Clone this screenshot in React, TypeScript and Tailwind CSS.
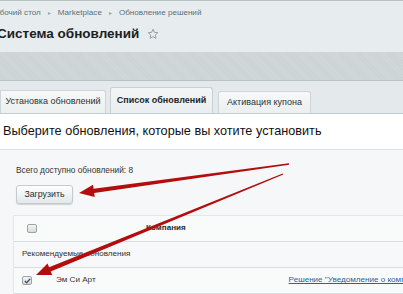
import React from "react";

type Pt = [number, number];

// tapered red arrow drawn from tail to tip
const arrowPoints = (tail: Pt, tip: Pt) => {
  const dx = tip[0] - tail[0];
  const dy = tip[1] - tail[1];
  const len = Math.hypot(dx, dy);
  const ux = dx / len;
  const uy = dy / len;
  const nx = -uy;
  const ny = ux;
  const headLen = 15;
  const base: Pt = [tip[0] - ux * headLen, tip[1] - uy * headLen];
  const p = (x: number, y: number) => `${x.toFixed(1)},${y.toFixed(1)}`;
  return [
    p(tail[0] + nx * 0.7, tail[1] + ny * 0.7),
    p(base[0] + nx * 2.2, base[1] + ny * 2.2),
    p(base[0] + nx * 6.2, base[1] + ny * 6.2),
    p(tip[0], tip[1]),
    p(base[0] - nx * 6.2, base[1] - ny * 6.2),
    p(base[0] - nx * 2.2, base[1] - ny * 2.2),
    p(tail[0] - nx * 0.7, tail[1] - ny * 0.7),
  ].join(" ");
};

const Star = () => (
  <svg width="12" height="12" viewBox="0 0 24 24" className="ml-[8px] mt-[1px]">
    <path
      d="M12 2.5l2.9 6.2 6.7.7-5 4.6 1.4 6.7L12 17.3l-5.9 3.4 1.4-6.7-5-4.6 6.7-.7z"
      fill="none"
      stroke="#8a979d"
      strokeWidth="1.8"
      strokeLinejoin="round"
    />
  </svg>
);

const Checkbox = ({ checked }: { checked?: boolean }) => (
  <div className="w-[10px] h-[9px] rounded-[2px] border border-[#9aa3a8] bg-gradient-to-b from-[#f4f5f6] to-[#d6dadd] flex items-center justify-center">
    {checked && (
      <svg width="7" height="6" viewBox="0 0 7 6">
        <path d="M0.8 3 L2.7 4.8 L6.2 0.8" fill="none" stroke="#4b5358" strokeWidth="1.3" />
      </svg>
    )}
  </div>
);

export default function App() {
  return (
    <div className="relative w-[403px] h-[294px] overflow-hidden bg-white font-['Liberation_Sans',Arial,sans-serif] text-[#222]">
      {/* header */}
      <div className="h-[52px] bg-[#e7edee] border-t border-[#b9c3c6]">
        <div className="flex items-center h-[25px] text-[8.1px] text-[#5d6e77] ml-[-10px] whitespace-nowrap">
          <span>Рабочий стол</span>
          <span className="mx-[7px] text-[6px] text-[#9aa6ab]">▸</span>
          <span>Marketplace</span>
          <span className="mx-[7px] text-[6px] text-[#9aa6ab]">▸</span>
          <span>Обновление решений</span>
        </div>
        <div className="flex items-center ml-[-3px] mt-[1px]">
          <h1 className="text-[13.5px] font-bold text-[#1b2124] leading-none whitespace-nowrap">Система обновлений</h1>
          <Star />
        </div>
      </div>

      {/* gray band */}
      <div className="h-[29px] bg-[#ccd5d7] border-b border-[#b8c2c5] bg-[repeating-linear-gradient(45deg,#cbd3d5_0px,#cbd3d5_1px,#d0d8da_1px,#d0d8da_2px)]" />

      {/* tabs */}
      <div className="h-[33px] bg-[#e4eaeb] flex items-end border-b border-[#c4cdd0] text-[9px] whitespace-nowrap">
        <div className="w-[106px] h-[23px] flex items-center justify-center bg-gradient-to-b from-[#f7f9f9] to-[#ebeff0] border border-b-0 border-[#cdd5d8] rounded-tr-[3px] text-[#2b3236]">
          Установка обновлений
        </div>
        <div className="ml-[4px] w-[103px] h-[26px] flex items-center justify-center bg-gradient-to-b from-[#f3f6f6] to-[#e9eef0] border border-b-0 border-[#c8d0d3] rounded-t-[3px] font-bold text-[#1f2528]">
          Список обновлений
        </div>
        <div className="ml-[5px] w-[93px] h-[22px] flex items-center justify-center bg-gradient-to-b from-[#f7f9f9] to-[#ebeff0] border border-b-0 border-[#cdd5d8] rounded-t-[3px] text-[#2b3236]">
          Активация купона
        </div>
      </div>

      {/* heading */}
      <div className="h-[36px] flex items-center pl-[3px] border-b border-[#dde3e5]">
        <h2 className="text-[12.7px] text-[#111] whitespace-nowrap">Выберите обновления, которые вы хотите установить</h2>
      </div>

      {/* panel */}
      <div className="bg-[#f5f7f8] h-[144px] pt-[14px]">
        <div className="pl-[16px] text-[8.3px] text-[#333] leading-[12px]">Всего доступно обновлений: 8</div>
        <button className="ml-[16px] mt-[9px] w-[57px] h-[19px] rounded-[3px] border border-[#c3cbcf] bg-gradient-to-b from-[#ffffff] to-[#e3e8ea] shadow-[0_1px_1px_rgba(0,0,0,0.15)] text-[8.8px] text-[#2a2f33]">
          Загрузить
        </button>

        <div className="ml-[13px] mt-[11px] bg-[#f9fbfb] border-l border-t border-[#e2e7e9] text-[8.1px] text-[#333] whitespace-nowrap">
          <div className="h-[26px] flex items-center border-b border-[#d9dfe1]">
            <div className="ml-[13px]">
              <Checkbox />
            </div>
            <div className="ml-[109px] font-bold text-[#2a2f33]">Компания</div>
          </div>
          <div className="h-[26px] flex items-center pl-[8px] border-b border-[#d9dfe1] bg-[#f6f8f9]">
            Рекомендуемые обновления
          </div>
          <div className="h-[26px] flex items-center border-b border-[#d9dfe1]">
            <div className="ml-[8px]">
              <Checkbox checked />
            </div>
            <div className="ml-[24px]">Эм Си Арт</div>
            <a className="ml-[193px] text-[#2465a8] underline">Решение "Уведомление о компании"</a>
          </div>
        </div>
      </div>

      {/* arrows */}
      <svg className="absolute inset-0 pointer-events-none" width="403" height="294">
        <polygon points={arrowPoints([289, 164], [79, 193])} fill="#b30d0d" />
        <polygon points={arrowPoints([283, 174], [36, 275])} fill="#b30d0d" />
      </svg>
    </div>
  );
}
